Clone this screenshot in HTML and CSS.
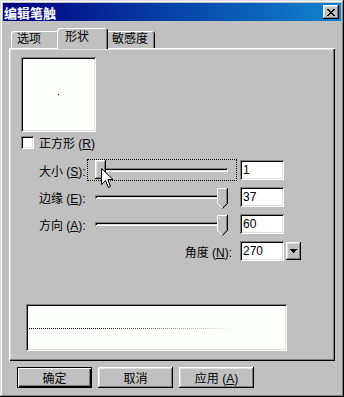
FILE: index.html
```html
<!DOCTYPE html>
<html lang="zh-CN">
<head>
    <meta charset="UTF-8">
    <title>编辑笔触</title>
    <link rel="stylesheet" href="styles.css">
</head>
<body>
    <div class="window">
        <div class="titlebar">
            <span class="title">编辑笔触</span>
            <button class="close-btn">
                <svg width="8" height="7" viewBox="0 0 8 7" shape-rendering="crispEdges">
                    <path d="M0 0h2v1H0zM6 0h2v1H6zM1 1h2v1H1zM5 1h2v1H5zM2 2h4v1H2zM3 3h2v1H3zM2 4h4v1H2zM1 5h2v1H1zM5 5h2v1H5zM0 6h2v1H0zM6 6h2v1H6z" fill="#000"/>
                </svg>
            </button>
        </div>

        <div class="dialog-body">
            <div class="tabs">
                <div class="tab tab-options">选项</div>
                <div class="tab tab-shape active">形状</div>
                <div class="tab tab-sens">敏感度</div>
            </div>

            <div class="panel">
                <div class="shape-preview"><span class="dot"></span></div>

                <div class="check-row">
                    <span class="checkbox"></span>
                    <span>正方形 (<u>R</u>)</span>
                </div>

                <div class="fields">
                    <div class="field-row">
                        <span class="field-label">大小 (<u>S</u>):</span>
                        <div class="slider focused">
                            <div class="track"></div>
                            <div class="thumb-flat"></div>
                            <!-- mouse pointer over the thumb -->
                            <svg class="cursor" width="13" height="21" viewBox="0 0 13 21">
                                <path d="M0.5 0.5V16.5L4.5 12.5L7.5 19.5L9.5 18.5L6.8 11.5H12Z" fill="#fff" stroke="#000" stroke-linejoin="miter"/>
                            </svg>
                        </div>
                        <div class="edit">1</div>
                    </div>

                    <div class="field-row">
                        <span class="field-label">边缘 (<u>E</u>):</span>
                        <div class="slider">
                            <div class="track"></div>
                            <svg class="thumb" width="11" height="21" viewBox="0 0 11 21">
                                <path d="M0 0H11V16L5.5 21L0 16Z" fill="#c0c0c0"/>
                                <path d="M0.5 15.5V0.5H10" stroke="#fff" fill="none"/>
                                <path d="M0.5 15.5L4.5 19.5" stroke="#fff" fill="none"/>
                                <path d="M10.5 0V15.5L5.5 20.5" stroke="#000" fill="none"/>
                                <path d="M9.5 1V15L5.5 19" stroke="#808080" fill="none"/>
                            </svg>
                        </div>
                        <div class="edit">37</div>
                    </div>

                    <div class="field-row">
                        <span class="field-label">方向 (<u>A</u>):</span>
                        <div class="slider">
                            <div class="track"></div>
                            <svg class="thumb" width="11" height="21" viewBox="0 0 11 21">
                                <path d="M0 0H11V16L5.5 21L0 16Z" fill="#c0c0c0"/>
                                <path d="M0.5 15.5V0.5H10" stroke="#fff" fill="none"/>
                                <path d="M0.5 15.5L4.5 19.5" stroke="#fff" fill="none"/>
                                <path d="M10.5 0V15.5L5.5 20.5" stroke="#000" fill="none"/>
                                <path d="M9.5 1V15L5.5 19" stroke="#808080" fill="none"/>
                            </svg>
                        </div>
                        <div class="edit">60</div>
                    </div>

                    <div class="field-row">
                        <span class="angle-label">角度 (<u>N</u>):</span>
                        <div class="edit">270</div>
                        <div class="combo-btn">
                            <svg width="7" height="4" viewBox="0 0 7 4" shape-rendering="crispEdges">
                                <path d="M0 0h7v1H0zM1 1h5v1H1zM2 2h3v1H2zM3 3h1v1H3z" fill="#000"/>
                            </svg>
                        </div>
                    </div>
                </div>

                <div class="stroke-preview"><div class="stroke-line"></div></div>
            </div>

            <div class="buttons">
                <button class="btn default">确定</button>
                <button class="btn">取消</button>
                <button class="btn">应用 (<u>A</u>)</button>
            </div>
        </div>
    </div>
</body>
</html>
```

FILE: styles.css
```css
:root {
    --face: #c0c0c0;
    --light: #dfdfdf;
    --shadow: #808080;
    --paper: #fcfefc;
    --raised: inset -1px -1px #000, inset 1px 1px #fff, inset -2px -2px #808080, inset 2px 2px #dfdfdf;
    --sunken: inset 1px 1px #808080, inset -1px -1px #fff, inset 2px 2px #000, inset -2px -2px #dfdfdf;
}

* {
    margin: 0;
    padding: 0;
    box-sizing: border-box;
}

body {
    background: var(--face);
    font-family: "Liberation Sans", "Noto Sans CJK SC", sans-serif;
    font-size: 12px;
    color: #000;
}

u {
    text-decoration: underline;
}

.window {
    width: 344px;
    height: 397px;
    padding: 3px;
    background: var(--face);
    box-shadow: inset -1px -1px #000, inset 1px 1px #dfdfdf, inset -2px -2px #808080, inset 2px 2px #fff;
}

.titlebar {
    height: 18px;
    display: flex;
    align-items: center;
    justify-content: space-between;
    padding: 0 2px 0 1px;
    background: linear-gradient(90deg, #000080, #1084d0);
    color: #fff;
}

.title {
    font-size: 13px;
    font-weight: bold;
}

.close-btn {
    width: 16px;
    height: 14px;
    border: none;
    background: var(--face);
    box-shadow: var(--raised);
    display: flex;
    align-items: center;
    justify-content: center;
}

.dialog-body {
    padding: 7px 6px 0;
}

/* tab strip */
.tabs {
    display: flex;
    align-items: flex-end;
    height: 20px;
    padding-left: 2px;
}

.tab {
    height: 17px;
    line-height: 17px;
    padding-left: 6px;
    background: var(--face);
    border-radius: 3px 3px 0 0;
    box-shadow: inset 1px 1px #fff, inset -1px 0 #000, inset -2px 0 #808080;
}

.tab-options { width: 48px; }
.tab-shape { width: 47px; }
.tab-sens { width: 49px; }

.tab.active {
    width: 51px;
    height: 21px;
    line-height: 18px;
    padding-left: 8px;
    margin: 0 -2px -1px;
    position: relative;
    z-index: 1;
}

.panel {
    height: 313px;
    display: flex;
    flex-direction: column;
    align-items: flex-start;
    background: var(--face);
    box-shadow: inset 1px 1px #fff, inset -1px -1px #000, inset -2px -2px #808080, inset 2px 2px #dfdfdf;
}

.shape-preview {
    width: 75px;
    height: 75px;
    margin: 9px 0 0 12px;
    background: var(--paper);
    box-shadow: var(--sunken);
    display: flex;
    align-items: center;
    justify-content: center;
}

.dot {
    width: 1px;
    height: 1px;
    background: #000;
}

.check-row {
    display: flex;
    align-items: center;
    gap: 5px;
    height: 13px;
    margin: 4px 0 0 12px;
}

.checkbox {
    width: 13px;
    height: 13px;
    background: #fff;
    box-shadow: var(--sunken);
}

.fields {
    display: flex;
    flex-direction: column;
    gap: 7px;
    margin: 11px 0 0 30px;
}

.field-row {
    display: flex;
    align-items: center;
    height: 20px;
}

.field-label {
    width: 48px;
    white-space: nowrap;
}

.angle-label {
    width: 198px;
    padding-right: 5px;
    text-align: right;
}

.slider {
    position: relative;
    width: 150px;
    height: 22px;
    border: 1px dotted transparent;
}

.slider.focused {
    border-color: #000;
}

.track {
    width: 133px;
    height: 4px;
    margin: 8px 0 0 7px;
    box-shadow: inset 1px 1px #808080, inset -1px -1px #fff, inset 2px 2px #000, inset -2px -2px #dfdfdf;
}

.thumb {
    position: absolute;
    left: 129px;
    top: 1px;
}

.thumb-flat {
    position: absolute;
    left: 7px;
    top: 0;
    width: 11px;
    height: 19px;
    background: var(--face);
    box-shadow: var(--raised);
}

.cursor {
    position: absolute;
    left: 13px;
    top: 8px;
}

.edit {
    width: 44px;
    height: 20px;
    margin-left: 3px;
    padding-left: 3px;
    line-height: 20px;
    background: #fff;
    box-shadow: var(--sunken);
}

.combo-btn {
    width: 15px;
    height: 18px;
    margin-left: 2px;
    background: var(--face);
    box-shadow: var(--raised);
    display: flex;
    align-items: center;
    justify-content: center;
}

.stroke-preview {
    width: 261px;
    height: 47px;
    margin: 43px 0 0 17px;
    padding: 24px 0 0 3px;
    background: var(--paper);
    box-shadow: var(--sunken);
}

.stroke-line {
    width: 206px;
    height: 1px;
    background-image:
        linear-gradient(90deg, rgba(252, 254, 252, 0) 30%, #fcfefc),
        repeating-linear-gradient(90deg, #000 0 1px, transparent 1px 2px);
}

.buttons {
    display: flex;
    gap: 6px;
    margin: 6px 0 0 8px;
}

.btn {
    width: 75px;
    height: 21px;
    border: none;
    background: var(--face);
    box-shadow: var(--raised);
    font: inherit;
    color: #000;
}

.btn.default {
    box-shadow: inset 0 0 0 1px #000, inset 2px 2px #fff, inset -2px -2px #000, inset -3px -3px #808080;
}
```
